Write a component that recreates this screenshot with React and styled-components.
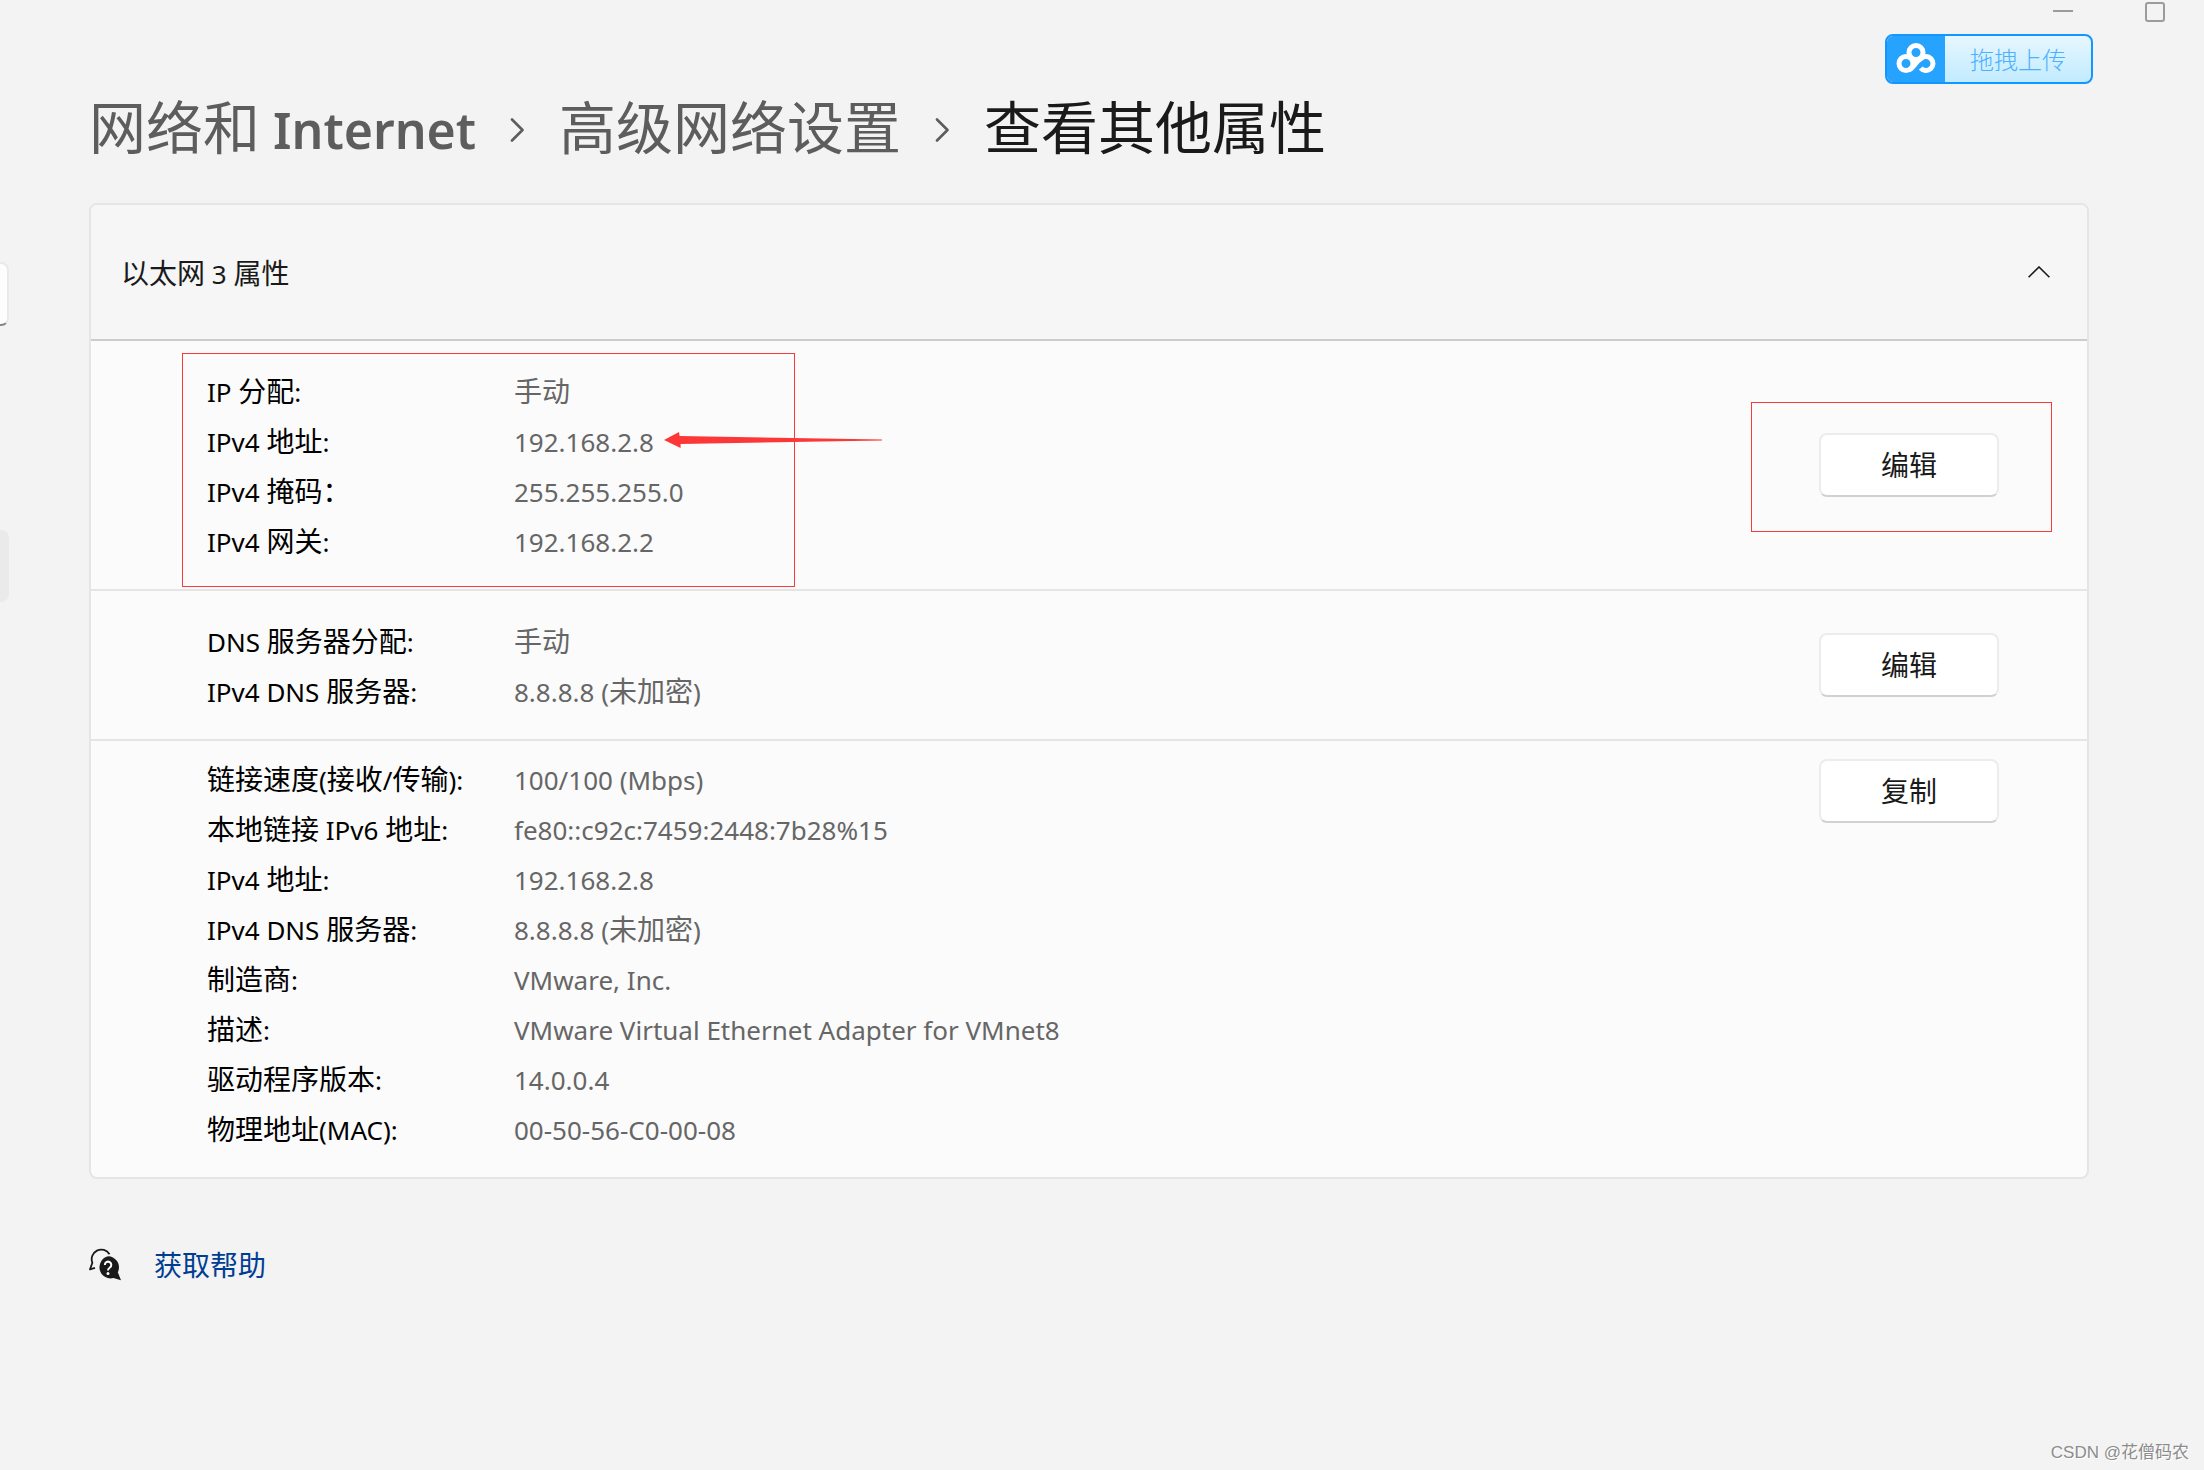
import React, { useState } from 'react';
import styled, { createGlobalStyle } from 'styled-components';

const GlobalStyle = createGlobalStyle`
  * {
    box-sizing: border-box;
  }

  body {
    margin: 0;
    background: #f3f3f3;
    color: #1a1a1a;
    font-family: 'Noto Sans', 'Noto Sans CJK SC', sans-serif;
    font-size: 26px;
  }

  button,
  input {
    font: inherit;
    color: inherit;
  }
`;

const Window = styled.div`
  position: relative;
  display: flex;
  min-height: 100vh;
  overflow: hidden;
`;

const Sidebar = styled.aside`
  flex: 0 0 9px;
  display: flex;
  flex-direction: column;
  gap: 204px;
  padding-top: 262px;
`;

const SearchBox = styled.input`
  width: 100%;
  height: 64px;
  padding: 0;
  background: #fdfdfd;
  border: 2px solid #e9e9e9;
  border-left: 0;
  border-bottom-color: #868686;
  border-radius: 0 8px 8px 0;
  outline: none;
`;

const NavItem = styled.a`
  height: 72px;
  background: #eaeaea;
  border-radius: 0 8px 8px 0;
`;

const Main = styled.main`
  flex: 1;
  min-width: 0;
  padding: 0 115px 0 80px;
`;

const TitleBar = styled.div`
  display: flex;
  justify-content: flex-end;
  gap: 72px;
  height: 24px;
  padding-top: 2px;
  margin-right: -76px;
`;

const WindowButton = styled.button`
  display: flex;
  padding: 0;
  border: 0;
  background: none;
`;

const UploadButton = styled.button`
  position: absolute;
  top: 34px;
  right: 111px;
  display: flex;
  width: 208px;
  height: 50px;
  padding: 0;
  border: 2px solid #1296ff;
  border-radius: 8px;
  overflow: hidden;
  background: linear-gradient(#e6f7ff, #c2ebff);
  color: #4db0ff;
  cursor: pointer;
`;

const UploadLogo = styled.span`
  display: flex;
  align-items: center;
  justify-content: center;
  width: 58px;
  height: 100%;
  background: #26a3ff;
`;

const UploadText = styled.span`
  flex: 1;
  font-family: 'Noto Sans CJK SC', sans-serif;
  font-size: 24px;
  font-weight: 300;
  line-height: 46px;
`;

const Breadcrumb = styled.nav`
  display: flex;
  align-items: center;
  gap: 34px;
  padding-top: 66px;
  margin-bottom: 33px;
  font-size: 50px;
  font-weight: 600;
  line-height: 80px;
  white-space: nowrap;
`;

const Crumb = styled.a`
  color: #5d5d5d;
  text-decoration: none;
`;

const CurrentCrumb = styled.h1`
  margin: 0;
  font: inherit;
`;

const CrumbCjk = styled.span`
  font-family: 'Noto Sans CJK SC', sans-serif;
  font-size: 57px;
  font-weight: 400;
  line-height: 1;
`;

const Cjk = styled.span`
  font-family: 'Noto Sans CJK SC', sans-serif;
  font-size: 28px;
  line-height: 1;
`;

const Card = styled.section`
  border: 2px solid #e5e5e5;
  border-radius: 8px;
  background: #fbfbfb;
`;

const CardHeader = styled.button`
  display: flex;
  align-items: center;
  justify-content: space-between;
  width: 100%;
  height: 136px;
  padding: 0 37px 0 30px;
  border: 0;
  border-bottom: 2px solid #cccccc;
  border-radius: 6px 6px 0 0;
  background: #f6f6f6;
  cursor: pointer;
`;

const CardTitle = styled.span`
  padding-top: 4px;
  line-height: 50px;
`;

const Group = styled.div`
  position: relative;
  display: flex;
  align-items: ${props => (props.$top ? 'flex-start' : 'center')};
  justify-content: space-between;
  padding: 0 88px 0 116px;

  & + & {
    border-top: 2px solid #e5e5e5;
  }
`;

const Properties = styled.dl`
  display: grid;
  grid-template-columns: 307px auto;
  grid-auto-rows: 50px;
  margin: 0;
  padding: ${props => (props.$top ? '14px' : '26px')} 0 22px;
  line-height: 50px;
  white-space: nowrap;
`;

const Label = styled.dt`
  color: #000000;
`;

const Value = styled.dd`
  margin: 0;
  color: #666666;
`;

const ArrowAnchor = styled.span`
  position: relative;
`;

const Arrow = styled.svg`
  position: absolute;
  left: calc(100% + 10px);
  top: 50%;
  margin-top: -10px;
`;

const ActionSlot = styled.div`
  position: relative;
  padding-top: ${props => (props.$top ? '18px' : '0')};
`;

const ActionButton = styled.button`
  display: block;
  width: 180px;
  height: 64px;
  padding: 2px 0 0;
  border: 2px solid #ececec;
  border-bottom-color: #d1d1d1;
  border-radius: 8px;
  background: #ffffff;
  line-height: 58px;
  cursor: pointer;
`;

const Outline = styled.div`
  position: absolute;
  border: 1px solid #f93a3a;
  pointer-events: none;
`;

const PropertiesOutline = styled(Outline)`
  top: 12px;
  bottom: 2px;
  left: 91px;
  width: 613px;
`;

const ButtonOutline = styled(Outline)`
  top: -31px;
  right: -53px;
  bottom: -35px;
  left: -68px;
`;

const Help = styled.a`
  display: inline-flex;
  align-items: center;
  gap: 33px;
  margin-top: 58px;
  color: #003e92;
  text-decoration: none;
`;

const HelpText = styled.span`
  padding-top: 4px;
  line-height: 50px;
`;

const Watermark = styled.div`
  position: absolute;
  right: 15px;
  bottom: 5px;
  color: #8c8c8c;
  font-family: 'Liberation Sans', 'Noto Sans CJK SC', sans-serif;
  font-size: 17px;
  line-height: 24px;
  text-shadow: 1px 1px 0 #ffffff;
`;

const groups = [
  {
    id: 'ip',
    action: '编辑',
    outlined: true,
    rows: [
      { label: 'IP 分配:', value: '手动' },
      { label: 'IPv4 地址:', value: '192.168.2.8', arrow: true },
      { label: 'IPv4 掩码：', value: '255.255.255.0' },
      { label: 'IPv4 网关:', value: '192.168.2.2' },
    ],
  },
  {
    id: 'dns',
    action: '编辑',
    rows: [
      { label: 'DNS 服务器分配:', value: '手动' },
      { label: 'IPv4 DNS 服务器:', value: '8.8.8.8 (未加密)' },
    ],
  },
  {
    id: 'adapter',
    action: '复制',
    top: true,
    rows: [
      { label: '链接速度(接收/传输):', value: '100/100 (Mbps)' },
      { label: '本地链接 IPv6 地址:', value: 'fe80::c92c:7459:2448:7b28%15' },
      { label: 'IPv4 地址:', value: '192.168.2.8' },
      { label: 'IPv4 DNS 服务器:', value: '8.8.8.8 (未加密)' },
      { label: '制造商:', value: 'VMware, Inc.' },
      { label: '描述:', value: 'VMware Virtual Ethernet Adapter for VMnet8' },
      { label: '驱动程序版本:', value: '14.0.0.4' },
      { label: '物理地址(MAC):', value: '00-50-56-C0-00-08' },
    ],
  },
];

// Chinese runs are set slightly larger than the Latin text around them
const Text = ({ children, as: Run = Cjk }) =>
  children
    .split(/([\u4e00-\u9fff\uff00-\uffef]+)/)
    .map((part, i) => (i % 2 ? <Run key={i}>{part}</Run> : part));

const CrumbArrow = () => (
  <svg width="15" height="24" viewBox="0 0 15 24" fill="none" stroke="#5d5d5d" strokeWidth="2.6" aria-hidden="true">
    <path d="M2 1.5 12.5 12 2 22.5" strokeLinecap="round" strokeLinejoin="round" />
  </svg>
);

const CloudLogo = () => (
  <svg width="40" height="32" viewBox="0 0 40 32" fill="none" stroke="#ffffff" strokeWidth="5" aria-hidden="true">
    <circle cx="20" cy="9.5" r="7" />
    <circle cx="10" cy="20.5" r="7" />
    <path d="M13.500 26.500C18 24 21 17 26.500 14.800" />
    <path d="M25 15.600a7 7 0 1 1-.3 9.500" />
  </svg>
);

const HelpIcon = () => (
  <svg width="32" height="33" viewBox="0 0 32 33" fill="none" aria-hidden="true">
    <path
      d="M20.5 6.2A9.6 9.6 0 0 0 3.4 14.8L1 21.4l5-1.6"
      stroke="#1a1a1a"
      strokeWidth="1.8"
      strokeLinejoin="round"
    />
    <path d="M19 8.3a11 11 0 0 1 9.8 16L32 32.3l-7.6-2.2A11 11 0 1 1 19 8.3z" fill="#1a1a1a" />
    <path d="M15.9 17a3.2 3.2 0 1 1 5 2.5c-1.3.9-1.9 1.5-1.9 3" stroke="#ffffff" strokeWidth="2" />
    <circle cx="19" cy="25.5" r="1.5" fill="#ffffff" />
  </svg>
);

const App = () => {
  const [open, setOpen] = useState(true);

  return (
    <Window>
      <GlobalStyle />

      <Sidebar>
        <SearchBox type="search" aria-label="Search" />
        <NavItem href="#network" aria-label="Network" />
      </Sidebar>

      <Main>
        <TitleBar>
          <WindowButton aria-label="Minimize">
            <svg width="20" height="20" viewBox="0 0 20 20">
              <path d="M0 9h20" stroke="#9b9b9b" strokeWidth="2" />
            </svg>
          </WindowButton>
          <WindowButton aria-label="Maximize">
            <svg width="20" height="20" viewBox="0 0 20 20">
              <rect x="1" y="1" width="18" height="18" rx="2" fill="none" stroke="#9b9b9b" strokeWidth="2" />
            </svg>
          </WindowButton>
        </TitleBar>

        <Breadcrumb>
          <Crumb href="#network"><Text as={CrumbCjk}>网络和 Internet</Text></Crumb>
          <CrumbArrow />
          <Crumb href="#advanced"><Text as={CrumbCjk}>高级网络设置</Text></Crumb>
          <CrumbArrow />
          <CurrentCrumb><Text as={CrumbCjk}>查看其他属性</Text></CurrentCrumb>
        </Breadcrumb>

        <Card>
          <CardHeader aria-expanded={open} onClick={() => setOpen(!open)}>
            <CardTitle><Text>以太网 3 属性</Text></CardTitle>
            <svg width="22" height="12" viewBox="0 0 22 12" fill="none" stroke="#1a1a1a" strokeWidth="1.6">
              <path d={open ? 'M.6 11.2 11 1l10.4 10.2' : 'M.6.8 11 11 21.4.8'} />
            </svg>
          </CardHeader>

          {open && groups.map((group) => (
            <Group key={group.id} $top={group.top}>
              <Properties $top={group.top}>
                {group.rows.map((row) => (
                  <React.Fragment key={row.label}>
                    <Label><Text>{row.label}</Text></Label>
                    <Value>
                      <ArrowAnchor>
                        <Text>{row.value}</Text>
                        {row.arrow && (
                          <Arrow width="218" height="16" viewBox="0 0 218 16" fill="#fc3737">
                            <path d="M0 8 15 0l.6 4L218 7.5v1L16.6 12v4z" />
                          </Arrow>
                        )}
                      </ArrowAnchor>
                    </Value>
                  </React.Fragment>
                ))}
              </Properties>
              <ActionSlot $top={group.top}>
                <ActionButton><Text>{group.action}</Text></ActionButton>
                {group.outlined && <ButtonOutline />}
              </ActionSlot>
              {group.outlined && <PropertiesOutline />}
            </Group>
          ))}
        </Card>

        <Help href="#help">
          <HelpIcon />
          <HelpText><Text>获取帮助</Text></HelpText>
        </Help>
      </Main>

      <UploadButton>
        <UploadLogo><CloudLogo /></UploadLogo>
        <UploadText>拖拽上传</UploadText>
      </UploadButton>

      <Watermark>CSDN @花僧码农</Watermark>
    </Window>
  );
};

export default App;
